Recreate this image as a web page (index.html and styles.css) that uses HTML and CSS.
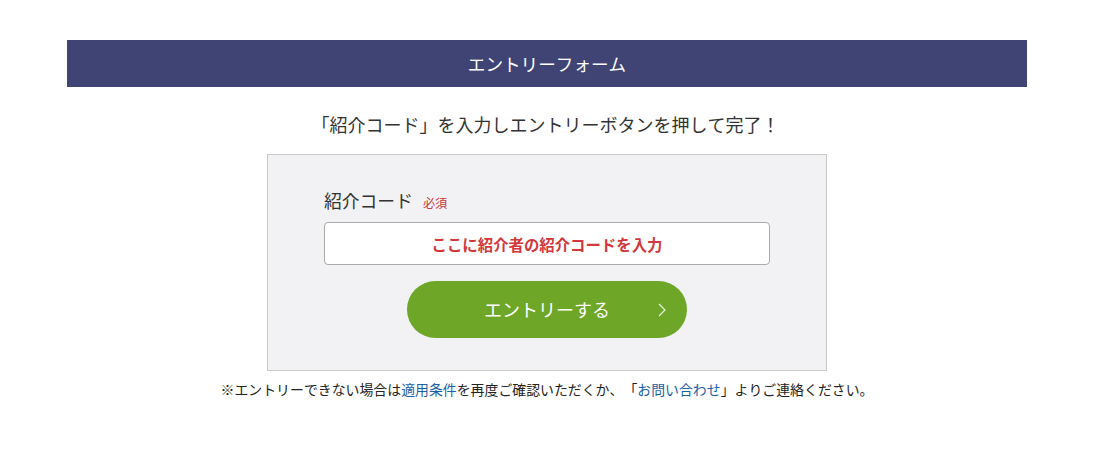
FILE: index.html
```html
<!DOCTYPE html>
<html lang="ja">
<head>
<meta charset="utf-8">
<title>エントリーフォーム</title>
<link rel="stylesheet" href="styles.css">
</head>
<body>
<div class="page">
  <h1 class="title-bar">エントリーフォーム</h1>
  <p class="lead">「紹介コード」を入力しエントリーボタンを押して完了！</p>
  <div class="form-box">
    <div class="label-row">
      <span class="label">紹介コード</span><span class="required">必須</span>
    </div>
    <div class="input">ここに紹介者の紹介コードを入力</div>
    <div class="btn-row">
      <button class="entry-btn" type="button">
        <span class="btn-text">エントリーする</span>
        <svg class="chev" width="8" height="14" viewBox="0 0 8 14"><path d="M1 1 L7 7 L1 13" fill="none" stroke="#e8f2da" stroke-width="1.2"/></svg>
      </button>
    </div>
  </div>
  <p class="note">※エントリーできない場合は<a href="#">適用条件</a>を再度ご確認いただくか、「<a href="#">お問い合わせ</a>」よりご連絡ください。</p>
</div>
</body>
</html>
```
FILE: styles.css
```css
* { box-sizing: border-box; }
body {
  margin: 0;
  padding: 40px 6px 0 0;
  background: #fff;
  font-family: "Noto Sans CJK JP", "Noto Sans", sans-serif;
  color: #333;
  text-spacing-trim: space-all;
  font-kerning: none;
}
.page {
  width: 960px;
  margin: 0 auto;
  display: flex;
  flex-direction: column;
  align-items: center;
}
.title-bar {
  width: 960px;
  height: 47px;
  margin: 0;
  background: #404475;
  color: #fff;
  font-size: 17.6px;
  font-weight: normal;
  display: flex;
  align-items: center;
  justify-content: center;
}
.lead {
  margin: 25px 0 0;
  height: 42px;
  font-size: 18px;
  line-height: 24px;
  padding-right: 3px;
}
.form-box {
  width: 560px;
  background: #f2f2f4;
  border: 1px solid #cbcbcb;
  padding: 33px 56px 32px;
}
.label-row {
  display: flex;
  align-items: baseline;
  height: 34px;
}
.label {
  font-size: 17.8px;
  line-height: 24px;
  color: #333;
}
.required {
  font-size: 12.2px;
  color: #c8383d;
  margin-left: 10px;
}
.input {
  height: 43px;
  background: #fff;
  border: 1px solid #aaa;
  border-radius: 4px;
  display: flex;
  align-items: center;
  justify-content: center;
  color: #d2373c;
  font-weight: bold;
  font-size: 15.4px;
}
.btn-row {
  display: flex;
  justify-content: center;
  margin-top: 16px;
}
.entry-btn {
  position: relative;
  width: 280px;
  height: 57px;
  border: none;
  border-radius: 29px;
  background: #6ea627;
  color: #fff;
  font-family: inherit;
  font-size: 18px;
  display: flex;
  align-items: center;
  justify-content: center;
  padding: 0 0 2px;
}
.chev {
  position: absolute;
  right: 21px;
  top: 22px;
}
.note {
  margin: 8px 0 0;
  font-size: 13.9px;
  line-height: 20px;
  color: #222;
}
.note a {
  color: #1d5fa6;
  text-decoration: none;
}
```
